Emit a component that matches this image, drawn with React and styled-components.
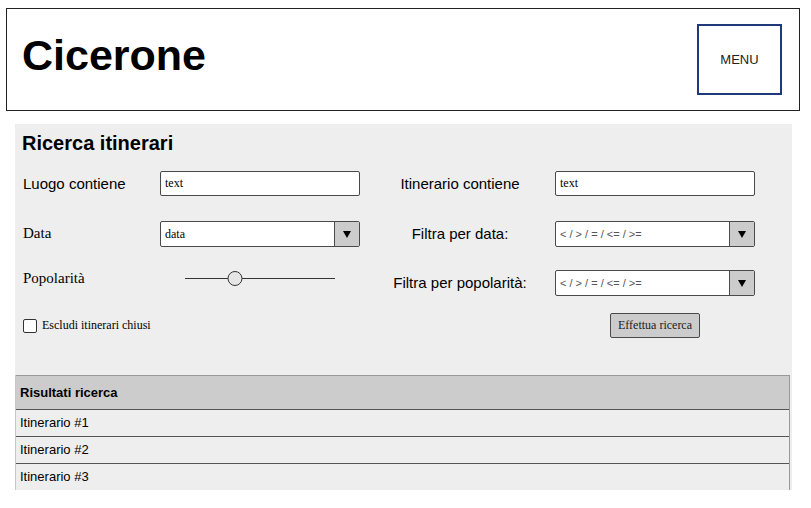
import React, { useState } from 'react';
import styled, { createGlobalStyle } from 'styled-components';

const GlobalStyle = createGlobalStyle`
  html, body {
    margin: 0;
    padding: 0;
    background: #fff;
  }
  body {
    font-family: "Liberation Sans", Arial, sans-serif;
    color: #000;
  }
  * {
    box-sizing: border-box;
  }
`;

const Page = styled('div')`
  padding: 8px 0 0 6px;
`;

const Header = styled('header')`
  width: 794px;
  height: 103px;
  border: 1px solid #222;
  display: flex;
  align-items: center;
  justify-content: space-between;
  padding: 0 17px 0 15px;
`;

const Logo = styled('h1')`
  margin: 0 0 8px 0;
  font-size: 43px;
  font-weight: 700;
  line-height: 1;
`;

const MenuButton = styled('div')`
  width: 85px;
  height: 71px;
  border: 2px solid #1f3a7c;
  display: flex;
  align-items: center;
  justify-content: center;
  font-size: 13px;
  color: #222;
  cursor: pointer;
`;

const Panel = styled('section')`
  margin: 13px 0 0 9px;
  width: 777px;
  background: #eeeeee;
`;

const Search = styled('div')`
  height: 251px;
  padding: 7px 0 0 7px;
`;

const Title = styled('h2')`
  margin: 0;
  font-size: 20px;
  font-weight: 700;
  line-height: 24px;
`;

/*
  columns: label | input | right label (centered) | input
  row tops at 170 / 220 / 269 / 312
*/
const FormGrid = styled('div')`
  margin-top: 16px;
  display: grid;
  grid-template-columns: 138px 200px 195px 200px;
  grid-template-rows: 50px 49px 43px 25px;
  align-items: start;
`;

const Label = styled('div')`
  height: ${(p) => p.$h || 25}px;
  display: flex;
  align-items: center;
  justify-content: ${(p) => (p.$center ? 'center' : 'flex-start')};
  padding-left: ${(p) => (p.$center ? 5 : 1)}px;
  font-family: ${(p) => (p.$serif ? '"Liberation Serif", "Times New Roman", serif' : '"Liberation Sans", Arial, sans-serif')};
  font-size: 15px;
  white-space: nowrap;
`;

const TextInput = styled('input')`
  width: 200px;
  height: 25px;
  margin: 0;
  padding: 0 4px;
  border: 1px solid #4a4a4a;
  border-radius: 2px;
  background: #fff;
  font-family: "Liberation Serif", "Times New Roman", serif;
  font-size: 12px;
  color: #000;
  outline: none;
`;

const Select = styled('div')`
  width: 200px;
  height: 26px;
  display: flex;
  border: 1px solid #4a4a4a;
  border-radius: 2px;
  background: #fff;
  overflow: hidden;
`;

const SelectValue = styled('div')`
  flex: 1;
  display: flex;
  align-items: center;
  padding-left: 4px;
  font-family: ${(p) => (p.$serif ? '"Liberation Serif", "Times New Roman", serif' : '"Liberation Sans", Arial, sans-serif')};
  font-size: ${(p) => (p.$serif ? 12 : 11)}px;
  color: ${(p) => (p.$serif ? '#000' : '#555')};
`;

const SelectButton = styled('div')`
  width: 25px;
  border-left: 1px solid #4a4a4a;
  background: #cccccc;
  display: flex;
  align-items: center;
  justify-content: center;
`;

const Caret = styled('span')`
  width: 0;
  height: 0;
  border-left: 4px solid transparent;
  border-right: 4px solid transparent;
  border-top: 7px solid #000;
  margin-top: 1px;
`;

const SliderCell = styled('div')`
  height: 17px;
  display: flex;
  align-items: center;
  padding: 0 25px;
`;

const Track = styled('div')`
  position: relative;
  width: 150px;
  height: 1px;
  background: #333;
`;

const Thumb = styled('div')`
  position: absolute;
  top: -7px;
  width: 15px;
  height: 15px;
  border-radius: 50%;
  border: 1px solid #333;
  background: #e6e6e6;
  transform: translateX(-50%);
`;

const CheckRow = styled('label')`
  grid-column: 1 / span 2;
  height: 25px;
  display: flex;
  align-items: center;
  gap: 5px;
  padding-left: 1px;
  font-family: "Liberation Serif", "Times New Roman", serif;
  font-size: 12px;
  cursor: pointer;
`;

const CheckBox = styled('span')`
  width: 14px;
  height: 14px;
  border: 1px solid #333;
  border-radius: 2px;
  background: ${(p) => (p.$checked ? '#555' : '#fff')};
`;

const ButtonCell = styled('div')`
  grid-column: 4;
  display: flex;
  justify-content: center;
`;

const SearchButton = styled('button')`
  width: 90px;
  height: 25px;
  margin: 0;
  padding: 0;
  border: 1px solid #4a4a4a;
  border-radius: 2px;
  background: #cccccc;
  font-family: "Liberation Serif", "Times New Roman", serif;
  font-size: 12px;
  color: #222;
  cursor: pointer;
`;

const Results = styled('div')`
  width: 775px;
  border-left: 1px solid #c8c8c8;
  border-right: 1px solid #999;
  font-size: 13px;
`;

const ResultsHead = styled('div')`
  height: 34px;
  border-top: 1px solid #999;
  background: #cccccc;
  display: flex;
  align-items: center;
  padding-left: 4px;
  font-weight: 700;
`;

const ResultRow = styled('div')`
  height: 27px;
  border-top: 1px solid #555;
  display: flex;
  align-items: center;
  padding: 0 0 1px 4px;
`;

const operators = '< / > / = / <= / >=';

function App() {
  const [excludeClosed, setExcludeClosed] = useState(false);
  const [popularity] = useState(50 / 150);
  const results = ['Itinerario #1', 'Itinerario #2', 'Itinerario #3'];

  return (
    <Page>
      <GlobalStyle />
      <Header>
        <Logo>Cicerone</Logo>
        <MenuButton>MENU</MenuButton>
      </Header>
      <Panel>
        <Search>
          <Title>Ricerca itinerari</Title>
          <FormGrid>
            <Label>Luogo contiene</Label>
            <TextInput defaultValue="text" />
            <Label $center>Itinerario contiene</Label>
            <TextInput defaultValue="text" />

            <Label $serif>Data</Label>
            <Select>
              <SelectValue $serif>data</SelectValue>
              <SelectButton><Caret /></SelectButton>
            </Select>
            <Label $center>Filtra per data:</Label>
            <Select>
              <SelectValue>{operators}</SelectValue>
              <SelectButton><Caret /></SelectButton>
            </Select>

            <Label $serif $h={17}>Popolarità</Label>
            <SliderCell>
              <Track>
                <Thumb style={{ left: `${popularity * 100}%` }} />
              </Track>
            </SliderCell>
            <Label $center>Filtra per popolarità:</Label>
            <Select>
              <SelectValue>{operators}</SelectValue>
              <SelectButton><Caret /></SelectButton>
            </Select>

            <CheckRow onClick={() => setExcludeClosed(!excludeClosed)}>
              <CheckBox $checked={excludeClosed} />
              Escludi itinerari chiusi
            </CheckRow>
            <ButtonCell>
              <SearchButton>Effettua ricerca</SearchButton>
            </ButtonCell>
          </FormGrid>
        </Search>
        <Results>
          <ResultsHead>Risultati ricerca</ResultsHead>
          {results.map((name) => (
            <ResultRow key={name}>{name}</ResultRow>
          ))}
        </Results>
      </Panel>
    </Page>
  );
}

export default App;
